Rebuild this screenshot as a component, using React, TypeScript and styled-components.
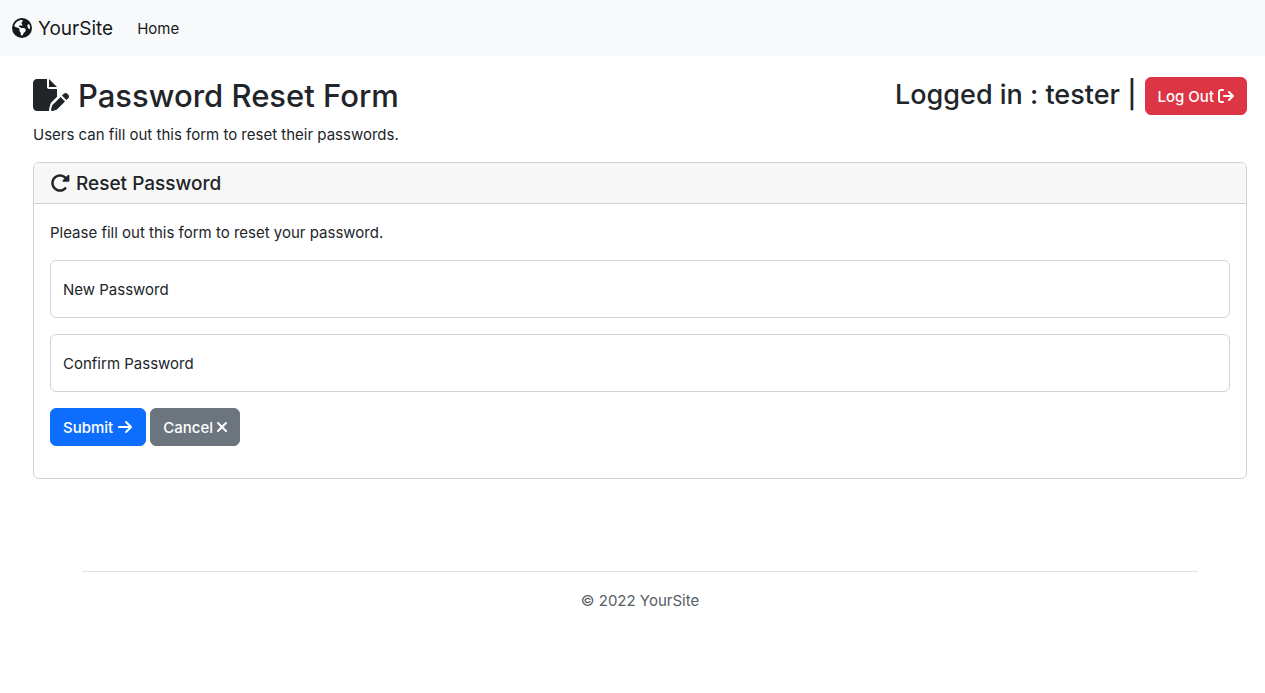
import React from "react";
import styled, { createGlobalStyle } from "styled-components";
import { FaEarthAmericas, FaFilePen, FaRotateRight, FaArrowRightFromBracket, FaArrowRight } from "react-icons/fa6";

const GlobalStyle = createGlobalStyle`
  *, *::before, *::after { box-sizing: border-box; }
  body {
    margin: 0;
    background: #fff;
    color: #212529;
    font-family: Inter, "Liberation Sans", sans-serif;
    font-size: 15px;
    line-height: 26px;
  }
`;

const Navbar = styled.nav`
  display: flex;
  align-items: center;
  gap: 24px;
  height: 56px;
  padding: 0 12px;
  background: #f8f9fa;
`;
const Brand = styled.a`
  display: inline-flex;
  align-items: center;
  gap: 6px;
  color: #17191c;
  font-size: 19px;
  text-decoration: none;
`;
const NavLink = styled.a`
  display: inline-flex;
  color: #17191c;
  text-decoration: none;
`;
const Text = styled.span`
  padding-top: 2px;
  line-height: 22px;
`;
const Main = styled.main`
  padding: 21px 18px 0 33px;
`;
const Header = styled.header`
  display: flex;
  justify-content: space-between;
  align-items: flex-start;
  margin-bottom: 7px;
`;
const Title = styled.h1`
  display: flex;
  align-items: center;
  gap: 9px;
  margin: 0;
  font-size: 31px;
  line-height: 36px;
  font-weight: 500;
`;
const Session = styled.div`
  display: flex;
  align-items: flex-start;
  gap: 8px;
  font-size: 27px;
  line-height: 36px;
  font-weight: 500;
`;
const Button = styled.button<{ $color: string }>`
  display: inline-flex;
  align-items: center;
  gap: 4px;
  padding: 6px 12px;
  border: 1px solid ${(p) => p.$color};
  border-radius: 6px;
  background: ${(p) => p.$color};
  color: #fff;
  font: inherit;
  font-size: 15px;
  font-weight: 500;
  line-height: 24px;
  cursor: pointer;

  svg {
    width: auto;
    height: 16px;
  }
`;
const Lead = styled.p`
  margin: 0 0 14px;
`;
const Card = styled.section`
  border: 1px solid #d0d1d2;
  border-radius: 6px;
`;
const CardHeader = styled.h2`
  display: flex;
  align-items: center;
  gap: 6px;
  margin: 0;
  padding: 8px 16px;
  border-bottom: 1px solid #d0d1d2;
  border-radius: 5px 5px 0 0;
  background: #f7f7f7;
  font-size: 19px;
  font-weight: 500;
`;
const Form = styled.form`
  padding: 16px 16px 32px;
`;
const Field = styled.div`
  display: grid;
  margin-bottom: 16px;
  > * { grid-area: 1 / 1; }
`;
const Label = styled.label`
  align-self: center;
  justify-self: start;
  padding: 2px 0 0 13px;
  pointer-events: none;
`;
const Input = styled.input`
  width: 100%;
  height: 58px;
  padding: 16px 12px;
  border: 1px solid #ced4da;
  border-radius: 6px;
  background: #fff;
  font: inherit;
`;
const Actions = styled.div`
  display: flex;
  gap: 4px;
`;
const Footer = styled.footer`
  margin: 92px 49px 0;
  padding-top: 16px;
  border-top: 1px solid #dee2e6;
  color: #585d62;
  text-align: center;
`;

function CloseIcon() {
  return (
    <svg viewBox="0 0 320 512" width="10" height="16" fill="currentColor" aria-hidden="true">
      <path d="M310.6 150.6c12.5-12.5 12.5-32.8 0-45.3s-32.8-12.5-45.3 0L160 210.7 54.6 105.4c-12.5-12.5-32.8-12.5-45.3 0s-12.5 32.8 0 45.3L114.7 256 9.4 361.4c-12.5 12.5-12.5 32.8 0 45.3s32.8 12.5 45.3 0L160 301.3 265.4 406.6c12.5 12.5 32.8 12.5 45.3 0s12.5-32.8 0-45.3L205.3 256 310.6 150.6z" />
    </svg>
  );
}

function PasswordField({ id, label }: { id: string; label: string }) {
  return (
    <Field>
      <Input id={id} type="password" />
      <Label htmlFor={id}>{label}</Label>
    </Field>
  );
}

export default function App() {
  return (
    <>
      <GlobalStyle />
      <Navbar>
        <Brand href="#"><FaEarthAmericas size={20} /><Text>YourSite</Text></Brand>
        <NavLink href="#"><Text>Home</Text></NavLink>
      </Navbar>
      <Main>
        <Header>
          <Title><FaFilePen size={36} /><Text>Password Reset Form</Text></Title>
          <Session>
            <span>Logged in : tester |</span>
            <Button type="button" $color="#dc3545"><Text>Log Out</Text><FaArrowRightFromBracket /></Button>
          </Session>
        </Header>
        <Lead>Users can fill out this form to reset their passwords.</Lead>
        <Card>
          <CardHeader><FaRotateRight size={20} /><Text>Reset Password</Text></CardHeader>
          <Form onSubmit={(e) => e.preventDefault()}>
            <Lead>Please fill out this form to reset your password.</Lead>
            <PasswordField id="new-password" label="New Password" />
            <PasswordField id="confirm-password" label="Confirm Password" />
            <Actions>
              <Button type="submit" $color="#0d6efd"><Text>Submit</Text><FaArrowRight /></Button>
              <Button type="reset" $color="#6c757d"><Text>Cancel</Text><CloseIcon /></Button>
            </Actions>
          </Form>
        </Card>
        <Footer>© 2022 YourSite</Footer>
      </Main>
    </>
  );
}
